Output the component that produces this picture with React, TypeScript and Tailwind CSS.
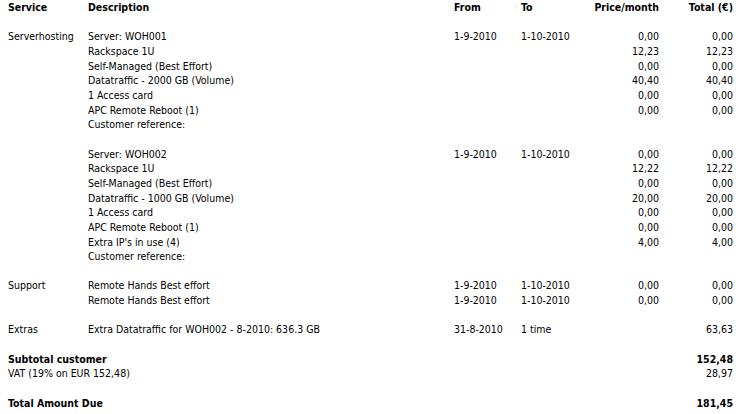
import React from "react";

type Row = {
  s?: string;
  d?: string;
  f?: string;
  t?: string;
  p?: string;
  tot?: string;
  bold?: boolean;
  span?: boolean;
};

const rows: (Row | null)[] = [
  { s: "Service", d: "Description", f: "From", t: "To", p: "Price/month", tot: "Total (€)", bold: true },
  null,
  { s: "Serverhosting", d: "Server: WOH001", f: "1-9-2010", t: "1-10-2010", p: "0,00", tot: "0,00" },
  { d: "Rackspace 1U", p: "12,23", tot: "12,23" },
  { d: "Self-Managed (Best Effort)", p: "0,00", tot: "0,00" },
  { d: "Datatraffic - 2000 GB (Volume)", p: "40,40", tot: "40,40" },
  { d: "1 Access card", p: "0,00", tot: "0,00" },
  { d: "APC Remote Reboot (1)", p: "0,00", tot: "0,00" },
  { d: "Customer reference:" },
  null,
  { d: "Server: WOH002", f: "1-9-2010", t: "1-10-2010", p: "0,00", tot: "0,00" },
  { d: "Rackspace 1U", p: "12,22", tot: "12,22" },
  { d: "Self-Managed (Best Effort)", p: "0,00", tot: "0,00" },
  { d: "Datatraffic - 1000 GB (Volume)", p: "20,00", tot: "20,00" },
  { d: "1 Access card", p: "0,00", tot: "0,00" },
  { d: "APC Remote Reboot (1)", p: "0,00", tot: "0,00" },
  { d: "Extra IP's in use (4)", p: "4,00", tot: "4,00" },
  { d: "Customer reference:" },
  null,
  { s: "Support", d: "Remote Hands Best effort", f: "1-9-2010", t: "1-10-2010", p: "0,00", tot: "0,00" },
  { d: "Remote Hands Best effort", f: "1-9-2010", t: "1-10-2010", p: "0,00", tot: "0,00" },
  null,
  { s: "Extras", d: "Extra Datatraffic for WOH002 - 8-2010: 636.3 GB", f: "31-8-2010", t: "1 time", tot: "63,63" },
  null,
  { s: "Subtotal customer", tot: "152,48", bold: true, span: true },
  { s: "VAT (19% on EUR 152,48)", tot: "28,97", span: true },
  null,
  { s: "Total Amount Due", tot: "181,45", bold: true, span: true },
];

export default function App() {
  return (
    <div
      className="w-[743px] h-[414px] bg-white text-black pl-[8px] pr-[10px] overflow-hidden text-[10.5px]"
      style={{ fontFamily: '"DejaVu Sans Condensed", "DejaVu Sans", sans-serif', fontStretch: "condensed" }}
    >
      {rows.map((r, i) =>
        r === null ? (
          <div key={i} className="h-[14.67px]" />
        ) : (
          <div
            key={i}
            className={`grid grid-cols-[80px_366px_67px_64px_74px_74px] h-[14.67px] items-center whitespace-nowrap ${
              r.bold ? "font-bold" : "font-normal"
            }`}
          >
            {r.span ? (
              <div className="col-span-5">{r.s}</div>
            ) : (
              <>
                <div>{r.s}</div>
                <div>{r.d}</div>
                <div>{r.f}</div>
                <div>{r.t}</div>
                <div className="text-right">{r.p}</div>
              </>
            )}
            <div className="text-right">{r.tot}</div>
          </div>
        )
      )}
    </div>
  );
}
